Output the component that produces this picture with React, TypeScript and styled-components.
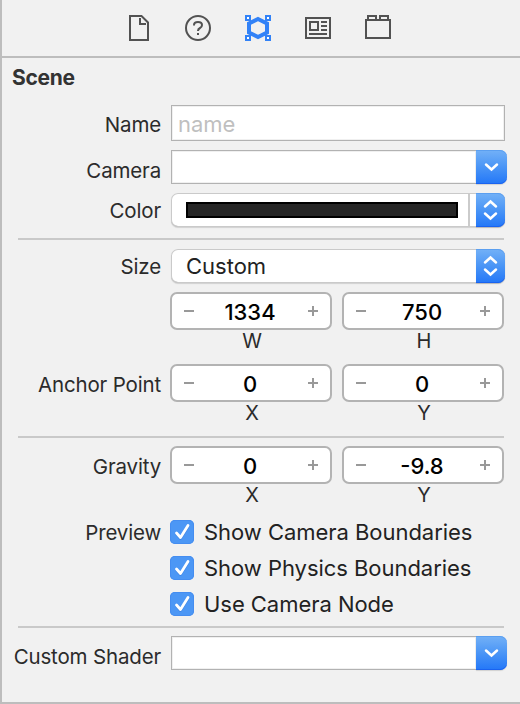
import React from "react";
import styled, { createGlobalStyle } from "styled-components";

const GlobalStyle = createGlobalStyle`
  * { box-sizing: border-box; }
  body { margin: 0; background: #f1f1f1; }
`;

const Panel = styled.main`
  width: 520px;
  height: 704px;
  overflow: hidden;
  background: #f1f1f1;
  border-left: 2px solid #bdbdbd;
  border-bottom: 2px solid #bdbdbd;
  font-family: Inter, "Liberation Sans", sans-serif;
  color: #2b2b2b;
`;

const Tabs = styled.nav`
  height: 58px;
  padding: 12px 0 0 121px;
  display: flex;
  gap: 28px;
  border-bottom: 2px solid #bdbdbd;
`;

const Tab = styled.button`
  width: 32px;
  height: 32px;
  padding: 0;
  border: 0;
  background: none;
  svg { display: block; }
`;

const Title = styled.h1`
  margin: 0;
  height: 47px;
  padding: 5px 0 0 10px;
  font-size: 21px;
  line-height: 29px;
  font-weight: 700;
  letter-spacing: -0.3px;
  color: #333;
`;

const Row = styled.div<{ $gap?: number }>`
  display: flex;
  align-items: flex-start;
  margin-bottom: ${(p) => p.$gap ?? 0}px;
`;

const Label = styled.div<{ $drop?: number; $inset?: number }>`
  flex: none;
  width: 159px;
  margin-right: ${(p) => p.$inset ?? 10}px;
  padding-top: ${(p) => p.$drop ?? 5}px;
  text-align: right;
  white-space: nowrap;
  font-size: 20.5px;
  letter-spacing: -0.16px;
  line-height: 26px;
`;

const NameInput = styled.input`
  width: 334px;
  height: 36px;
  padding: 2px 6px 0;
  border: 1px solid #b2b2b2;
  border-radius: 0;
  box-shadow: inset 0 0 0 1px #f0f0f0;
  background: #fff;
  font: 22px Inter, sans-serif;
  outline: 0;
  &::placeholder { color: #bfbfbf; opacity: 1; }
`;

const Combo = styled.div`
  width: 336px;
  height: 34px;
  display: flex;
`;

const ComboField = styled.div`
  flex: 1;
  border: 1px solid #b2b2b2;
  border-right: 0;
  box-shadow: inset 0 0 0 1px #f0f0f0;
  background: #fff;
`;

const BlueCap = styled.div<{ $w: number }>`
  flex: none;
  width: ${(p) => p.$w}px;
  height: 34px;
  border-radius: 0 7px 7px 0;
  background: linear-gradient(#73b1f7, #4a95f6 50%, #2377f8);
  box-shadow: inset 0 1px 0 #5b9ff0, inset 0 -1px 0 #1a63f0, 0 1px 1px #0002;
  svg { display: block; }
`;

const Popup = styled.div`
  width: 334px;
  height: 34px;
  display: flex;
  border-radius: 7px;
  background: #fff;
  box-shadow: inset 0 0 0 1px #cacaca, inset 0 -1px 0 #aaa, 0 1px 1px #0002;
`;

const PopupText = styled.span`
  flex: 1;
  padding-left: 15px;
  font-size: 22px;
  line-height: 34px;
  color: #222;
`;

const Well = styled.div`
  flex: 1;
  margin: 1px 6px 1px 0;
  padding: 8px 10px 0 15px;
  border-right: 2px solid #cbcbcb;
`;

const Swatch = styled.div`
  height: 16px;
  border: 2px solid #000;
  background: #262626;
`;

const Rule = styled.hr<{ $after: number }>`
  width: 486px;
  height: 2px;
  border: 0;
  margin: 0 0 ${(p) => p.$after}px 16px;
  background: #c9c9c9;
`;

const Field = styled.div`
  width: 162px;
  margin-right: 10px;
`;

const Stepper = styled.div`
  height: 38px;
  border: 2px solid #b3b3b3;
  border-radius: 7px;
  background: #fff;
  display: grid;
  grid-template-columns: 34px 1fr 34px;
  svg { display: block; }
`;

const Value = styled.span`
  text-align: center;
  font-size: 22px;
  font-weight: 450;
  line-height: 36px;
  color: #000;
  white-space: nowrap;
  margin: 0 -10px;
  padding-right: 2px;
`;

const Caption = styled.div`
  height: 24px;
  padding-left: 2px;
  text-align: center;
  font-size: 20px;
  line-height: 23px;
`;

const Checks = styled.div`
  display: flex;
  flex-direction: column;
  gap: 12px;
`;

const Check = styled.div`
  height: 24px;
  display: flex;
  gap: 10px;
  font-size: 22px;
  letter-spacing: -0.04px;
  line-height: 25px;
  white-space: nowrap;
  color: #222;
`;

const Box = styled.span`
  width: 24px;
  height: 24px;
  border-radius: 5px;
  background: #4c97f5;
  box-shadow: inset 0 0 0 1px #458df0;
  svg { display: block; }
`;

const dark = "#525252";
const blue = "#3282f7";

const ComboCap = () => (
  <BlueCap $w={31}>
    <svg width="31" height="34" fill="none" stroke="#fff" strokeWidth="2.5" strokeLinecap="round">
      <path d="M10 14.5l5.5 5 5.5-5" />
    </svg>
  </BlueCap>
);

const PopupCap = () => (
  <BlueCap $w={29}>
    <svg width="29" height="34" fill="none" stroke="#fff" strokeWidth="2.5" strokeLinecap="round">
      <path d="M9 13.5l5.5-5 5.5 5M9 20.5l5.5 5 5.5-5" />
    </svg>
  </BlueCap>
);

const NumberField = ({ value, name }: { value: string; name: string }) => (
  <Field>
    <Stepper>
      <svg width="34" height="34"><path d="M12 17h10" stroke="#999" strokeWidth="2" /></svg>
      <Value>{value}</Value>
      <svg width="34" height="34"><path d="M12 17h10M17 12v10" stroke="#999" strokeWidth="2" /></svg>
    </Stepper>
    <Caption>{name}</Caption>
  </Field>
);

const CheckRow = ({ text }: { text: string }) => (
  <Check>
    <Box>
      <svg width="24" height="24" fill="none" strokeWidth="2.8" strokeLinecap="round" strokeLinejoin="round">
        <path d="M6.5 14l4 4.5 7.5-12" stroke="#2d72d6" strokeOpacity=".45" />
        <path d="M6.5 13l4 4.5 7.5-12" stroke="#fff" />
      </svg>
    </Box>
    <span>{text}</span>
  </Check>
);

export default function App() {
  return (
    <>
      <GlobalStyle />
      <Panel>
        <Tabs>
          <Tab aria-label="File">
            <svg width="32" height="32" fill="none" stroke={dark} strokeWidth="2">
              <path d="M7 4h11.5L25 10.5V28H7z" />
              <path d="M17 6v6h6" />
            </svg>
          </Tab>
          <Tab aria-label="Help">
            <svg width="32" height="32" fill="none" stroke={dark} strokeWidth="2">
              <circle cx="15" cy="16" r="12" />
              <path d="M11 13.5V13q0-3 4-3t4 3q0 2-2 3-2 1-2 3" />
              <path d="M14 22h2" />
            </svg>
          </Tab>
          <Tab aria-label="Attributes">
            <svg width="32" height="32" fill="none" stroke={blue}>
              <path d="M15 7l9 4.5v9L15 25l-9-4.5v-9z" strokeWidth="4" />
              <g fill="#fff" strokeWidth="2">
                <path d="M3 4h4v4H3zM23 4h4v4h-4zM3 24h4v4H3zM23 24h4v4h-4z" />
              </g>
            </svg>
          </Tab>
          <Tab aria-label="Metadata">
            <svg width="32" height="32" fill="none" stroke={dark} strokeWidth="2">
              <path d="M3 6h24v20H3zM7 10h8v8H7zM18 10h6M18 14h6M18 18h6M6 22h18" />
            </svg>
          </Tab>
          <Tab aria-label="Components">
            <svg width="32" height="32" fill="none" stroke={dark} strokeWidth="2">
              <path d="M3 8h24v18H3zM5 8V4h8v4M17 8V4h8v4" />
            </svg>
          </Tab>
        </Tabs>
        <Title>Scene</Title>
        <Row $gap={9}>
          <Label $drop={7}>Name</Label>
          <NameInput placeholder="name" />
        </Row>
        <Row $gap={9}>
          <Label $drop={8}>Camera</Label>
          <Combo><ComboField /><ComboCap /></Combo>
        </Row>
        <Row $gap={11}>
          <Label>Color</Label>
          <Popup><Well><Swatch /></Well><PopupCap /></Popup>
        </Row>
        <Rule $after={9} />
        <Row $gap={9}>
          <Label>Size</Label>
          <Popup><PopupText>Custom</PopupText><PopupCap /></Popup>
        </Row>
        <Row $gap={10}>
          <Label $inset={9} />
          <NumberField value="1334" name="W" />
          <NumberField value="750" name="H" />
        </Row>
        <Row $gap={10}>
          <Label $inset={9} $drop={8}>Anchor Point</Label>
          <NumberField value="0" name="X" />
          <NumberField value="0" name="Y" />
        </Row>
        <Rule $after={8} />
        <Row $gap={12}>
          <Label $inset={9} $drop={8}>Gravity</Label>
          <NumberField value="0" name="X" />
          <NumberField value="-9.8" name="Y" />
        </Row>
        <Row $gap={10}>
          <Label $inset={9} $drop={0}>Preview</Label>
          <Checks>
            <CheckRow text="Show Camera Boundaries" />
            <CheckRow text="Show Physics Boundaries" />
            <CheckRow text="Use Camera Node" />
          </Checks>
        </Row>
        <Rule $after={8} />
        <Row>
          <Label $drop={8}>Custom Shader</Label>
          <Combo><ComboField /><ComboCap /></Combo>
        </Row>
      </Panel>
    </>
  );
}
